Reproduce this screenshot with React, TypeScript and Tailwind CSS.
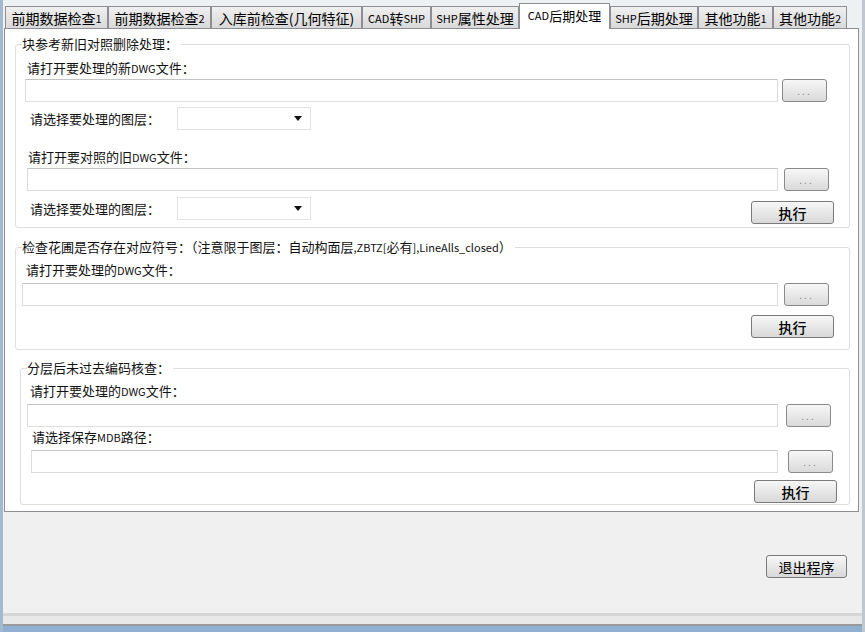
import React from "react";

const font = { fontFamily: '"Noto Sans CJK SC", "Noto Sans", sans-serif' };

const Sm = ({ children }: { children: React.ReactNode }) => (
  <span className="text-[11px]">{children}</span>
);

function Tab({ label, w, selected }: { label: React.ReactNode; w: number; selected?: boolean }) {
  if (selected) {
    return (
      <div
        className="relative z-10 -mb-px flex h-[26px] items-start justify-center whitespace-nowrap border border-b-0 border-[#8c8e94] bg-white pt-[3px] text-[13px] leading-[17px] text-[#000]"
        style={{ width: w }}
      >
        {label}
      </div>
    );
  }
  return (
    <div
      className="flex h-[22px] items-center justify-center whitespace-nowrap border border-b-0 border-[#8c8e94] bg-linear-to-b from-[#f0f0f0] to-[#d9d9d9] text-[14px] leading-[16px] text-[#000]"
      style={{ width: w }}
    >
      {label}
    </div>
  );
}

function TextBox({ w, ml }: { w: number; ml: number }) {
  return (
    <div
      className="h-[23px] shrink-0 border border-[#dcdcdc] border-t-[#c4c4c4] bg-white"
      style={{ width: w, marginLeft: ml }}
    />
  );
}

function DotsButton({ ml }: { ml: number }) {
  return (
    <div
      className="flex h-[23px] w-[45px] shrink-0 items-center justify-center rounded-[3px] border border-[#8a8a8a] bg-linear-to-b from-[#f7f7f7] to-[#dadada] text-[10px] leading-none tracking-[2px] text-[#8a8a8a]"
      style={{ marginLeft: ml }}
    >
      ...
    </div>
  );
}

function ExecButton({ className = "" }: { className?: string }) {
  return (
    <div
      className={
        "flex h-[23px] w-[83px] shrink-0 items-center justify-center rounded-[3px] border border-[#7a7a7a] bg-linear-to-b from-[#f7f7f7] to-[#d8d8d8] text-[14px] font-medium leading-none text-[#000] " +
        className
      }
    >
      执行
    </div>
  );
}

function Combo() {
  return (
    <div className="relative flex h-[23px] w-[134px] shrink-0 items-center justify-end border border-[#e2e2e2] bg-white pr-[8px]">
      <svg width="8" height="5" viewBox="0 0 8 5">
        <path d="M0 0 L8 0 L4 5 Z" fill="#111" />
      </svg>
    </div>
  );
}

function Label({ children, ml }: { children: React.ReactNode; ml: number }) {
  return (
    <div className="h-[16px] whitespace-nowrap text-[13px] leading-[16px] text-[#111]" style={{ marginLeft: ml }}>
      {children}
    </div>
  );
}

function GroupBox({
  title,
  ml,
  mt,
  w,
  h,
  titleLeft,
  children,
}: {
  title: React.ReactNode;
  ml: number;
  mt: number;
  w: number;
  h: number;
  titleLeft: number;
  children: React.ReactNode;
}) {
  return (
    <div
      className="relative shrink-0 rounded-[3px] border border-[#dedede]"
      style={{ marginLeft: ml, marginTop: mt, width: w, height: h }}
    >
      <div
        className="absolute top-[-9px] whitespace-nowrap bg-white pr-[3px] text-[13px] leading-[16px] text-[#111]"
        style={{ left: titleLeft }}
      >
        {title}
      </div>
      {children}
    </div>
  );
}

export default function App() {
  return (
    <div
      className="flex h-[632px] w-[865px] flex-col overflow-hidden border-l-[3px] border-r-[3px] border-l-[#a3b9cf] border-r-[#bfc7cf] bg-[#f0f0f0]"
      style={font}
    >
      {/* tab strip */}
      <div className="flex h-[28px] shrink-0 items-end bg-[#eef1f4] pl-[2px] pt-[3px]">
        <Tab label={<>前期数据检查<Sm>1</Sm></>} w={103} />
        <Tab label={<>前期数据检查<Sm>2</Sm></>} w={103} />
        <Tab label="入库前检查(几何特征)" w={151} />
        <Tab label={<><Sm>CAD</Sm>转<Sm>SHP</Sm></>} w={69} />
        <Tab label={<><Sm>SHP</Sm>属性处理</>} w={88} />
        <Tab label={<><Sm>CAD</Sm>后期处理</>} w={91} selected />
        <Tab label={<><Sm>SHP</Sm>后期处理</>} w={88} />
        <Tab label={<>其他功能<Sm>1</Sm></>} w={75} />
        <Tab label={<>其他功能<Sm>2</Sm></>} w={74} />
      </div>

      {/* tab page */}
      <div className="ml-[1px] flex h-[484px] w-[855px] shrink-0 flex-col border border-[#8c8e94] bg-white">
        {/* group 1 */}
        <GroupBox title="块参考新旧对照删除处理：" ml={10} mt={15} w={835} h={184} titleLeft={6}>
          <div className="flex flex-col pt-[15px]">
            <Label ml={11}>请打开要处理的新<Sm>DWG</Sm>文件：</Label>
            <div className="mt-[3px] flex items-center">
              <TextBox w={753} ml={9} />
              <DotsButton ml={4} />
            </div>
            <div className="mt-[5px] flex h-[23px] items-center">
              <Label ml={14}>请选择要处理的图层：</Label>
              <div className="ml-[17px]">
                <Combo />
              </div>
            </div>
            <div className="mt-[19px]">
              <Label ml={12}>请打开要对照的旧<Sm>DWG</Sm>文件：</Label>
            </div>
            <div className="mt-[3px] flex items-center">
              <TextBox w={751} ml={11} />
              <DotsButton ml={6} />
            </div>
            <div className="mt-[6px] flex items-start">
              <div className="flex h-[23px] items-center">
                <Label ml={14}>请选择要处理的图层：</Label>
                <div className="ml-[17px]">
                  <Combo />
                </div>
              </div>
              <ExecButton className="ml-[440px] mt-[4px]" />
            </div>
          </div>
        </GroupBox>

        {/* group 2 */}
        <GroupBox
          title={
            <>
              检查花圃是否存在对应符号：（注意限于图层：自动构面层<Sm>,ZBTZ[</Sm>必有<Sm>],LineAlls_closed</Sm>）
            </>
          }
          ml={10}
          mt={19}
          w={835}
          h={103}
          titleLeft={6}
        >
          <div className="flex flex-col pt-[14px]">
            <Label ml={10}>请打开要处理的<Sm>DWG</Sm>文件：</Label>
            <div className="mt-[5px] flex items-center">
              <TextBox w={756} ml={6} />
              <DotsButton ml={6} />
            </div>
            <div className="mt-[9px] flex justify-end pr-[15px]">
              <ExecButton />
            </div>
          </div>
        </GroupBox>

        {/* group 3 */}
        <GroupBox title="分层后未过去编码核查：" ml={15} mt={18} w={830} h={137} titleLeft={6}>
          <div className="flex flex-col pt-[14px]">
            <Label ml={9}>请打开要处理的<Sm>DWG</Sm>文件：</Label>
            <div className="mt-[5px] flex items-center">
              <TextBox w={751} ml={6} />
              <DotsButton ml={8} />
            </div>
            <div className="mt-[2px]">
              <Label ml={11}>请选择保存<Sm>MDB</Sm>路径：</Label>
            </div>
            <div className="mt-[5px] flex items-center">
              <TextBox w={747} ml={10} />
              <DotsButton ml={10} />
            </div>
            <div className="mt-[7px] flex justify-end pr-[12px]">
              <ExecButton />
            </div>
          </div>
        </GroupBox>
      </div>

      {/* bottom area */}
      <div className="flex flex-1 justify-end pr-[15px] pt-[43px]">
        <div className="flex h-[23px] w-[81px] items-center justify-center rounded-[3px] border border-[#7a7a7a] bg-linear-to-b from-[#f7f7f7] to-[#d8d8d8] text-[14px] leading-none text-[#000]">
          退出程序
        </div>
      </div>

      {/* bottom strips */}
      <div className="h-[3px] shrink-0 bg-[#d6d6d6]" />
      <div className="h-[8px] shrink-0 bg-[#e8e8e8]" />
      <div className="h-[2px] shrink-0 bg-[#9a9a9a]" />
      <div className="h-[6px] shrink-0 bg-[#8fb0d0]" />
    </div>
  );
}
